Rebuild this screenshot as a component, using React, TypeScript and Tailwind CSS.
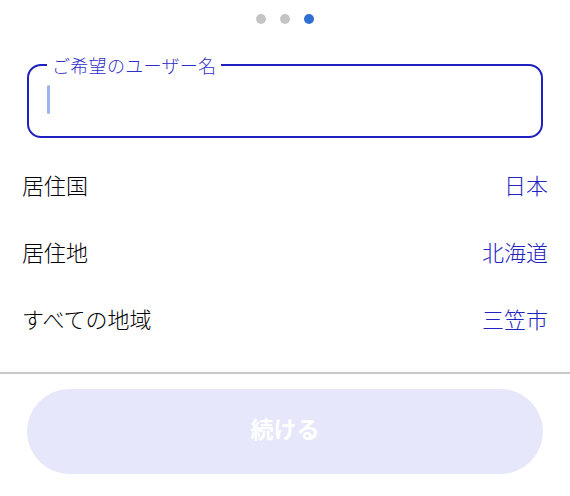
const rows = [
  { label: '居住国', value: '日本' },
  { label: '居住地', value: '北海道' },
  { label: 'すべての地域', value: '三笠市' },
];

export default function App() {
  return (
    <div
      className="w-full min-h-[496px] bg-white"
      style={{ fontFamily: '"Noto Sans CJK JP", "Noto Sans", sans-serif' }}
    >
      {/* Pager dots */}
      <div className="flex justify-center gap-[14px] pt-[14px]">
        <span className="h-[10px] w-[10px] rounded-full bg-[#c4c4c4]" />
        <span className="h-[10px] w-[10px] rounded-full bg-[#c4c4c4]" />
        <span className="h-[10px] w-[10px] rounded-full bg-[#2f6fd2]" />
      </div>

      {/* Username field */}
      <fieldset className="mx-[27px] mt-[31px] rounded-[14px] border-2 border-[#2020c0] px-[18px]">
        <legend className="px-[5px] text-[18px] leading-[20px] font-light tracking-[0.3px] text-[#2f2fc8]">
          ご希望のユーザー名
        </legend>
        <div className="h-[61px] pt-[10px]">
          <div className="h-[29px] w-[3px] rounded-full bg-[#9fb4ec]" />
        </div>
      </fieldset>

      {/* Region rows */}
      <div className="mt-[13px]">
        {rows.map((row) => (
          <div
            key={row.label}
            className="flex h-[67px] items-center justify-between px-[22px] text-[22px] font-light"
          >
            <span className="text-black">{row.label}</span>
            <span className="text-[#2323c0]">{row.value}</span>
          </div>
        ))}
      </div>

      <div className="mt-[20px] h-[1.5px] bg-[#c8c8c8]" />

      {/* Continue button */}
      <div className="px-[27px] pt-[15px]">
        <button
          type="button"
          className="flex h-[85px] w-full items-center justify-center rounded-full bg-[#e6e7fa] pb-[6px] text-[23px] font-semibold text-white"
        >
          続ける
        </button>
      </div>
    </div>
  );
}
